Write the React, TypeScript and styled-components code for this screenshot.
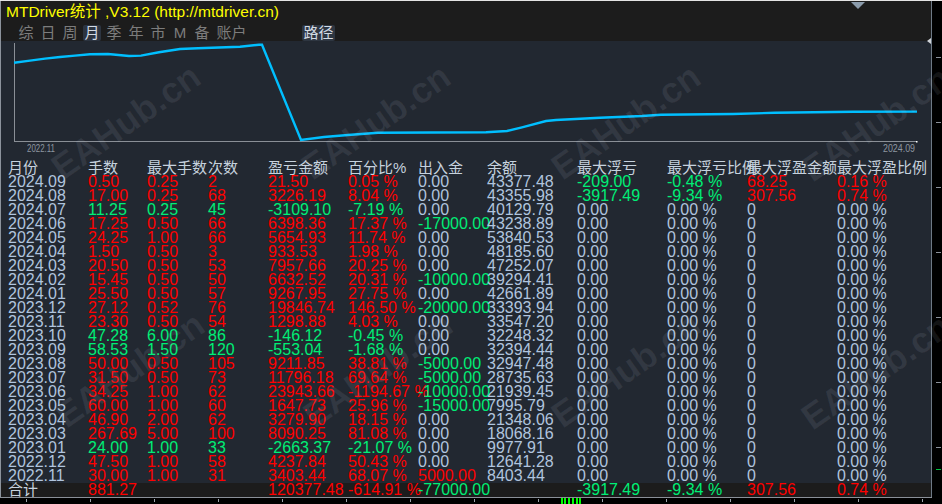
import React from 'react';
import styled, { createGlobalStyle } from 'styled-components';

type Tone = 'light' | 'red' | 'green';

const GlobalStyle = createGlobalStyle`
  html, body {
    margin: 0;
    padding: 0;
    background: #000;
  }
  body {
    font-family: "Liberation Sans", "Noto Sans CJK SC", Arial, sans-serif;
  }
`;

const toneColor: Record<Tone, string> = {
  light: '#b0c4de',
  red: '#ff0000',
  green: '#00ee76',
};

const HEADERS = ['月份', '手数', '最大手数', '次数', '盈亏金额', '百分比%', '出入金', '余额', '最大浮亏', '最大浮亏比例', '最大浮盈金额', '最大浮盈比例'];

const RAW = `2024.09|0.50|0.25|2|21.50|0.05 %|0.00|43377.48|-209.00|-0.48 %|68.25|0.16 %
2024.08|17.00|0.25|68|3226.19|8.04 %|0.00|43355.98|-3917.49|-9.34 %|307.56|0.74 %
2024.07|11.25|0.25|45|-3109.10|-7.19 %|0.00|40129.79
2024.06|17.25|0.50|66|6398.36|17.37 %|-17000.00|43238.89
2024.05|24.25|1.00|66|5654.93|11.74 %|0.00|53840.53
2024.04|1.50|0.50|3|933.53|1.98 %|0.00|48185.60
2024.03|20.50|0.50|53|7957.66|20.25 %|0.00|47252.07
2024.02|15.45|0.50|50|6632.52|20.31 %|-10000.00|39294.41
2024.01|25.50|0.50|57|9267.95|27.75 %|0.00|42661.89
2023.12|27.12|0.52|76|19846.74|146.50 %|-20000.00|33393.94
2023.11|23.30|0.50|54|1298.88|4.03 %|0.00|33547.20
2023.10|47.28|6.00|86|-146.12|-0.45 %|0.00|32248.32
2023.09|58.53|1.50|120|-553.04|-1.68 %|0.00|32394.44
2023.08|50.00|0.50|105|9211.85|38.81 %|-5000.00|32947.48
2023.07|31.50|0.50|73|11796.18|69.64 %|-5000.00|28735.63
2023.06|34.25|1.00|62|23943.66|-1194.67 %|-10000.00|21939.45
2023.05|60.00|1.00|60|1647.73|25.96 %|-15000.00|7995.79
2023.04|46.90|2.00|62|3279.90|18.15 %|0.00|21348.06
2023.03|267.69|5.00|100|8090.25|81.08 %|0.00|18068.16
2023.01|24.00|1.00|33|-2663.37|-21.07 %|0.00|9977.91
2022.12|47.50|1.00|58|4237.84|50.43 %|0.00|12641.28
2022.11|30.00|1.00|31|3403.44|68.07 %|5000.00|8403.44`;

const EMPTY_FLOAT = ['0.00', '0.00 %', '0', '0.00 %'];

const ROWS: string[][] = RAW.split('\n').map((line) => {
  const cells = line.split('|');
  return cells.length < 12 ? [...cells, ...EMPTY_FLOAT] : cells;
});

const TOTAL = ['合计', '881.27', '', '', '120377.48', '-614.91 %', '-77000.00', '', '-3917.49', '-9.34 %', '307.56', '0.74 %'];

const NAV = ['综', '日', '周', '月', '季', '年', '市', 'M', '备', '账户'];

const CURVE = [
  [14, 62.7], [30, 60.6], [45, 58.6], [60, 57], [75, 55.6], [90, 54.2], [108, 54], [129, 56],
  [141, 55.6], [159, 52.3], [180, 49], [198, 48.3], [240, 46.7], [259, 44.7], [262, 44.7],
  [301, 140], [324, 137], [348, 135], [378, 132.7], [486, 132.2], [507, 131], [522, 127.3],
  [546, 121], [556, 120], [600, 117.7], [642, 116], [661, 114.8], [733, 114], [775, 112.8],
  [853, 111.8], [917, 111.6],
];

const WATERMARKS = [
  [126, 122], [376, 122], [626, 122], [876, 124],
  [130, 370], [378, 370], [626, 370], [876, 372],
];

const SCALE_TICKS = [57, 122, 187, 252, 317, 382, 447];

function signTone(v: string): Tone {
  const n = parseFloat(v);
  if (!v || isNaN(n) || n === 0) return 'light';
  return n < 0 ? 'green' : 'red';
}

function cellTone(row: string[], i: number): Tone {
  if (i === 0 || i === 7) return 'light';
  if (i <= 5) return parseFloat(row[4]) < 0 ? 'green' : 'red';
  return signTone(row[i]);
}

function App() {
  return (
    <>
      <GlobalStyle />
      <Frame>
        <TopRule />
        <Body>
          <Main>
            <Header>
              <Title>MTDriver统计 ,V3.12 (http://mtdriver.cn)</Title>
              <Nav>
                {NAV.map((n) => (
                  <NavItem key={n} $active={n === '月'} $wide={n.length > 1}>{n}</NavItem>
                ))}
                <PathButton>路径</PathButton>
              </Nav>
              <DropMarker />
            </Header>
            <SideMarker />
            <Panel>
              <Chart viewBox="1 41 930 120" width="930" height="120">
                <line x1="14.5" y1="43" x2="14.5" y2="141.5" stroke="#8a8f96" strokeWidth="1" />
                <line x1="14" y1="141.5" x2="917" y2="141.5" stroke="#8a8f96" strokeWidth="1" />
                <rect x="916" y="141" width="1.5" height="1.5" fill="#ffffff" />
                <polyline
                  points={CURVE.map((p) => p.join(',')).join(' ')}
                  fill="none"
                  stroke="#00bfff"
                  strokeWidth="2.4"
                  strokeLinejoin="miter"
                />
                <AxisLabel x="27" y="152" textLength="28" lengthAdjust="spacingAndGlyphs">2022.11</AxisLabel>
                <AxisLabel x="915" y="152" textAnchor="end" textLength="32" lengthAdjust="spacingAndGlyphs">2024.09</AxisLabel>
              </Chart>
              <Table>
                <HeadRow>
                  {HEADERS.map((h) => (
                    <HeadCell key={h}>{h}</HeadCell>
                  ))}
                </HeadRow>
                {ROWS.map((row) => (
                  <Row key={row[0]}>
                    {row.map((c, i) => (
                      <Cell key={i} $tone={cellTone(row, i)}>{c}</Cell>
                    ))}
                  </Row>
                ))}
              </Table>
            </Panel>
            <TotalRow>
              {TOTAL.map((c, i) =>
                i === 0 ? <HeadCell key={i}>{c}</HeadCell> : <Cell key={i} $tone={cellTone(TOTAL, i)}>{c}</Cell>
              )}
            </TotalRow>
          </Main>
          <Scale>
            {SCALE_TICKS.map((y) => (
              <ScaleTick key={y} $top={y - 1} />
            ))}
            <ScaleTick $top={468} $green />
          </Scale>
        </Body>
        <TimeAxis>
          <Bars>
            {[0, 3, 7, 11, 15, 18].map((x) => (
              <Bar key={x} $left={x} />
            ))}
          </Bars>
        </TimeAxis>
        {WATERMARKS.map(([x, y], i) => (
          <Watermark key={i} $x={x} $y={y}>EAHub.cn</Watermark>
        ))}
      </Frame>
    </>
  );
}

export default App;

const COLUMNS = '80px 59px 61px 60px 80px 70px 69px 90px 90px 80px 90px 1fr';

const Frame = styled.div`
  position: relative;
  width: 942px;
  height: 504px;
  overflow: hidden;
  background: #000;
  display: flex;
  flex-direction: column;
`;

const TopRule = styled.div`
  height: 1px;
  background: #e4e4e4;
`;

const Body = styled.div`
  display: flex;
  height: 496px;
`;

const Main = styled.div`
  position: relative;
  width: 930px;
  border-left: 1px solid #8c939c;
  display: flex;
  flex-direction: column;
`;

const Header = styled.div`
  position: relative;
  height: 40px;
  background: #1c1c1c;
  display: flex;
  flex-direction: column;
`;

const Title = styled.div`
  height: 22px;
  line-height: 22px;
  padding-left: 5px;
  font-size: 15.5px;
  color: #ffff00;
  white-space: nowrap;
`;

const Nav = styled.div`
  margin-top: 2px;
  height: 16px;
  display: flex;
  align-items: center;
  padding-left: 16px;
  gap: 4px;
`;

const NavItem = styled.span<{ $active?: boolean; $wide?: boolean }>`
  width: ${(p) => (p.$wide ? '33px' : '18px')};
  height: 16px;
  line-height: 16px;
  text-align: center;
  font-size: 15px;
  border-radius: 2px;
  color: ${(p) => (p.$active ? '#d2dae4' : '#7c7c7c')};
  background: ${(p) => (p.$active ? '#2c3440' : 'transparent')};
`;

const PathButton = styled.span`
  margin-left: 50px;
  width: 33px;
  height: 16px;
  line-height: 16px;
  text-align: center;
  font-size: 15px;
  border-radius: 2px;
  color: #d2dae4;
  background: #2e3641;
`;

const DropMarker = styled.div`
  position: absolute;
  top: 1px;
  left: 850px;
  width: 0;
  height: 0;
  border-left: 7.5px solid transparent;
  border-right: 7.5px solid transparent;
  border-top: 7px solid #8b9bab;
`;

const SideMarker = styled.div`
  position: absolute;
  top: 37px;
  right: 0;
  width: 0;
  height: 0;
  border-top: 3px solid transparent;
  border-bottom: 3px solid transparent;
  border-right: 4px solid #cfd3d8;
`;

const Panel = styled.div`
  background: #222831;
  display: flex;
  flex-direction: column;
`;

const Chart = styled.svg`
  display: block;
  width: 930px;
  height: 120px;
`;

const AxisLabel = styled.text`
  font-family: "Liberation Sans", Arial, sans-serif;
  font-size: 10px;
  fill: #8d96a0;
`;

const Table = styled.div`
  display: flex;
  flex-direction: column;
`;

const Row = styled.div`
  display: grid;
  grid-template-columns: ${COLUMNS};
  padding-left: 7px;
  height: 14px;
  line-height: 14px;
  font-size: 16px;
`;

const HeadRow = styled(Row)`
  font-size: 15px;
`;

const HeadCell = styled.span`
  font-size: 15px;
  color: #c6d2de;
  white-space: nowrap;
`;

const Cell = styled.span<{ $tone: Tone }>`
  color: ${(p) => toneColor[p.$tone]};
  white-space: nowrap;
`;

const TotalRow = styled(Row)`
  position: relative;
  z-index: 1;
  background: #1c1c1c;
`;

const Scale = styled.div`
  position: relative;
  flex: 1;
  border-left: 1px solid #6e7985;
`;

const ScaleTick = styled.div<{ $top: number; $green?: boolean }>`
  position: absolute;
  top: ${(p) => p.$top}px;
  left: 4px;
  width: 5px;
  height: 1px;
  background: ${(p) => (p.$green ? '#00c040' : '#8a9099')};
`;

const TimeAxis = styled.div`
  position: relative;
  width: 932px;
  height: 7px;
  border-top: 1px solid #8a9098;
  background-image: repeating-linear-gradient(
    to right,
    transparent 0 26px,
    #a0a6ae 26px 27px,
    transparent 27px 64px
  );
  background-size: 100% 3px;
  background-repeat: no-repeat;
  background-position: 0 1px;
`;

const Bars = styled.div`
  position: absolute;
  left: 561px;
  top: 0;
  width: 21px;
  height: 7px;
`;

const Bar = styled.div<{ $left: number }>`
  position: absolute;
  left: ${(p) => p.$left}px;
  top: 0;
  width: 2px;
  height: 7px;
  background: #00ff00;
`;

const Watermark = styled.div<{ $x: number; $y: number }>`
  position: absolute;
  left: ${(p) => p.$x}px;
  top: ${(p) => p.$y}px;
  transform: translate(-50%, -50%) rotate(-35deg);
  font-family: "Liberation Sans", Arial, sans-serif;
  font-weight: bold;
  font-size: 36px;
  color: rgba(210, 220, 232, 0.09);
  white-space: nowrap;
  pointer-events: none;
`;
